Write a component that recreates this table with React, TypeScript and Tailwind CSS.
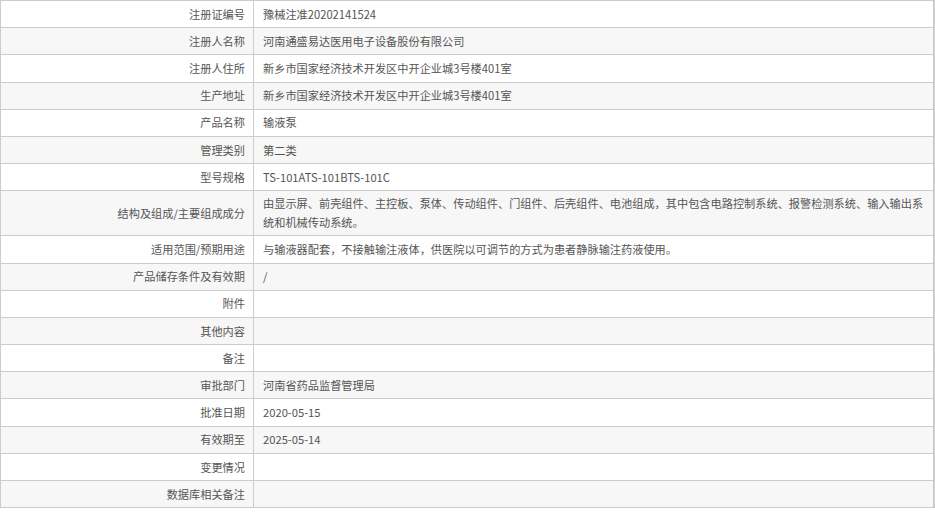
import React from "react";

const rows: [string, string][] = [
  ["注册证编号", "豫械注准20202141524"],
  ["注册人名称", "河南通盛易达医用电子设备股份有限公司"],
  ["注册人住所", "新乡市国家经济技术开发区中开企业城3号楼401室"],
  ["生产地址", "新乡市国家经济技术开发区中开企业城3号楼401室"],
  ["产品名称", "输液泵"],
  ["管理类别", "第二类"],
  ["型号规格", "TS-101ATS-101BTS-101C"],
  ["结构及组成/主要组成成分", "由显示屏、前壳组件、主控板、泵体、传动组件、门组件、后壳组件、电池组成，其中包含电路控制系统、报警检测系统、输入输出系统和机械传动系统。"],
  ["适用范围/预期用途", "与输液器配套，不接触输注液体，供医院以可调节的方式为患者静脉输注药液使用。"],
  ["产品储存条件及有效期", "/"],
  ["附件", ""],
  ["其他内容", ""],
  ["备注", ""],
  ["审批部门", "河南省药品监督管理局"],
  ["批准日期", "2020-05-15"],
  ["有效期至", "2025-05-14"],
  ["变更情况", ""],
  ["数据库相关备注", ""],
];

export default function App() {
  return (
    <div
      className="w-[935px] h-[518px] bg-white text-[11.2px] text-[#555]"
      style={{ fontFamily: '"Noto Sans CJK SC", "Noto Sans", sans-serif' }}
    >
      <div className="w-[935px] border-t border-l border-r-2 border-[#cccccc]">
        {rows.map(([k, v], i) => {
          const tall = i === 7;
          return (
            <div
              key={k}
              className={`flex border-b border-[#cccccc] ${i % 2 === 1 ? "bg-[#f7f7f7]" : "bg-white"} ${tall ? "h-[45px]" : "h-[27.2px]"}`}
            >
              <div className="w-[253px] shrink-0 flex items-center justify-end pr-[8px] border-r border-[#cccccc] whitespace-nowrap">
                {k}
              </div>
              <div className="flex-1 flex items-center pl-[9px] pr-[6px] leading-[19px]">
                <span>{v}</span>
              </div>
            </div>
          );
        })}
      </div>
    </div>
  );
}
